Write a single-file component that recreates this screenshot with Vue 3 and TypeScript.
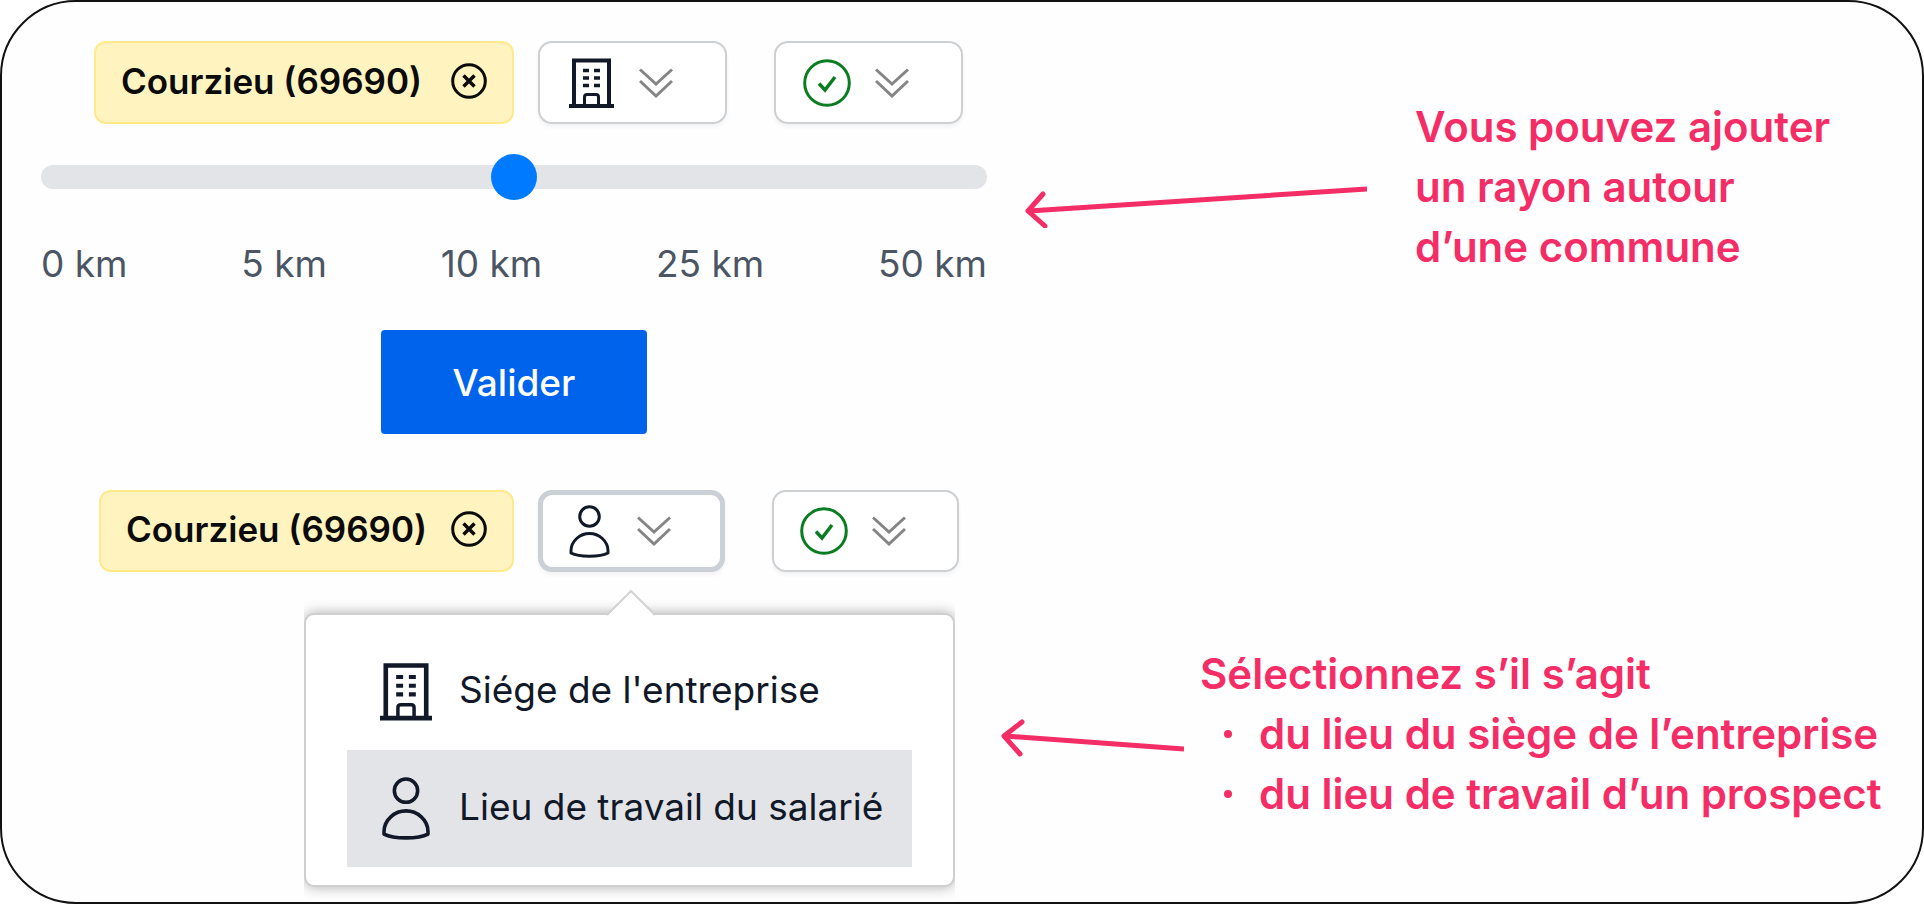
<script setup lang="ts">
import { computed, ref } from 'vue'

type PlaceKind = 'company' | 'person'

interface PlaceOption {
  kind: PlaceKind
  label: string
}

const town = 'Courzieu (69690)'
const marks: string[] = ['0 km', '5 km', '10 km', '25 km', '50 km']
const options: PlaceOption[] = [
  { kind: 'company', label: "Siége de l'entreprise" },
  { kind: 'person', label: 'Lieu de travail du salarié' },
]

const radius = ref<number>(50)
const selected = ref<PlaceKind>('person')

const rows = computed<{ id: string; kind: PlaceKind; open: boolean }[]>(() => [
  { id: 'radius', kind: 'company', open: false },
  { id: 'place', kind: selected.value, open: true },
])
</script>

<template>
  <svg class="defs" aria-hidden="true">
    <symbol id="i-company" viewBox="0 0 45 50">
      <path d="M5 48V2.500H40V48M0 48H45" fill="none" stroke="currentColor" stroke-width="4" />
      <path d="M15.500 48V39Q15.500 36.500 18 36.500H27Q29.500 36.500 29.500 39V48" fill="none" stroke="currentColor" stroke-width="3" />
      <path d="M14 12.500H20M25 12.500H31M14 20H20M25 20H31M14 27.500H20M25 27.500H31" stroke="currentColor" stroke-width="3.500" />
    </symbol>
    <symbol id="i-person" viewBox="0 0 41 53">
      <circle cx="20.500" cy="11.500" r="9.800" fill="none" stroke="currentColor" stroke-width="3" />
      <path d="M2 46C2 36 11 28.500 20.500 28.500S39 36 39 46V48C31 52.300 10 52.300 2 48Z" fill="none" stroke="currentColor" stroke-width="3" stroke-linejoin="round" />
    </symbol>
    <symbol id="i-check" viewBox="0 0 48 48">
      <circle cx="24" cy="24" r="22.300" fill="none" stroke="currentColor" stroke-width="3" />
      <path d="M16 24.500L22 31L32 18" fill="none" stroke="currentColor" stroke-width="3.500" />
    </symbol>
    <symbol id="i-chevrons" viewBox="0 0 34 30">
      <path d="M1 1.500L17 16L33 1.500M1 13L17 28L33 13" fill="none" stroke="currentColor" stroke-width="3" />
    </symbol>
    <symbol id="i-close" viewBox="0 0 36 36">
      <circle cx="18" cy="18" r="16.300" fill="none" stroke="currentColor" stroke-width="3" />
      <path d="M12.500 12.500L23.500 23.500M23.500 12.500L12.500 23.500" stroke="currentColor" stroke-width="3.500" />
    </symbol>
  </svg>

  <main class="card">
    <section v-for="row in rows" :key="row.id" class="step" :class="row.id">
      <div class="widget">
        <div class="filters">
          <span class="chip">
            {{ town }}
            <button type="button" class="close" aria-label="Retirer la commune">
              <svg class="icon-close"><use href="#i-close" /></svg>
            </button>
          </span>
          <button type="button" class="picker" :class="{ open: row.open }" :aria-expanded="row.open" aria-label="Type de lieu">
            <span class="slot">
              <svg :class="row.kind"><use :href="'#i-' + row.kind" /></svg>
            </span>
            <svg class="chevrons"><use href="#i-chevrons" /></svg>
          </button>
          <button type="button" class="picker status" aria-label="Inclure ou exclure">
            <span class="slot">
              <svg class="check"><use href="#i-check" /></svg>
            </span>
            <svg class="chevrons"><use href="#i-chevrons" /></svg>
          </button>
        </div>

        <template v-if="row.id === 'radius'">
          <input v-model.number="radius" class="slider" type="range" min="0" max="100" aria-label="Rayon" />
          <div class="marks">
            <span v-for="mark in marks" :key="mark">{{ mark }}</span>
          </div>
          <button type="button" class="submit">Valider</button>
        </template>

        <div v-else class="popup">
          <svg class="tip" viewBox="0 0 48 26" aria-hidden="true">
            <path d="M0 26L24 1L48 26Z" fill="#fff" />
            <path d="M0 25L24 1L48 25" fill="none" stroke="#d2d2d2" stroke-width="2" />
          </svg>
          <div class="panel">
            <button
              v-for="option in options"
              :key="option.kind"
              type="button"
              class="option"
              :class="{ selected: option.kind === selected }"
              :aria-pressed="option.kind === selected"
              @click="selected = option.kind"
            >
              <svg :class="option.kind"><use :href="'#i-' + option.kind" /></svg>
              <span class="label">{{ option.label }}</span>
            </button>
          </div>
        </div>
      </div>

      <template v-if="row.id === 'radius'">
        <svg class="arrow" viewBox="0 0 342 42" aria-hidden="true">
          <path d="M4 25L342 3" fill="none" stroke="#f52d66" stroke-width="5" />
          <path d="M18 8L3 25L20 40" fill="none" stroke="#f52d66" stroke-width="5" stroke-linecap="round" stroke-linejoin="round" />
        </svg>
        <p class="note">Vous pouvez ajouter<br />un rayon autour<br />d’une commune</p>
      </template>
      <template v-else>
        <svg class="arrow" viewBox="0 0 183 42" aria-hidden="true">
          <path d="M4 18L183 31" fill="none" stroke="#f52d66" stroke-width="5" />
          <path d="M21 4L3 18L19 36" fill="none" stroke="#f52d66" stroke-width="5" stroke-linecap="round" stroke-linejoin="round" />
        </svg>
        <div class="note">
          <p>Sélectionnez s’il s’agit</p>
          <ul>
            <li>du lieu du siège de l’entreprise</li>
            <li>du lieu de travail d’un prospect</li>
          </ul>
        </div>
      </template>
    </section>
  </main>
</template>

<style>
body {
  margin: 0;
  background: #fff;
}
</style>

<style scoped>
.defs {
  position: absolute;
  width: 0;
  height: 0;
}

.card {
  box-sizing: border-box;
  min-height: 100vh;
  padding: 39px 20px 15px 39px;
  border: 2px solid #111;
  border-radius: 76px;
  background: #fefefe;
  color: #111827;
  font-family: Inter, "Liberation Sans", sans-serif;
  font-size: 37px;
}

button {
  margin: 0;
  padding: 0;
  border: 0;
  background: none;
  color: inherit;
  font: inherit;
  cursor: pointer;
}

svg {
  display: block;
  flex: none;
}

.step {
  display: grid;
  align-items: start;
}

.radius {
  grid-template-columns: 946fr 342fr 497fr;
  column-gap: 38px;
}

.radius .note {
  padding-left: 10px;
}

.place {
  grid-template-columns: 944fr 183fr 702fr;
  column-gap: 16px;
  margin-top: 56px;
}

.filters {
  display: flex;
  align-items: stretch;
  height: 83px;
  margin-left: 53px;
}

.place .filters {
  height: 82px;
  margin-left: 58px;
}

.chip {
  display: flex;
  align-items: center;
  justify-content: space-between;
  box-sizing: border-box;
  width: 420px;
  padding: 0 25px 4px;
  border: 2px solid #ffe98c;
  border-radius: 12px;
  background: #fff4bf;
  color: #0b0b0b;
  font-size: 35px;
  font-weight: 600;
  white-space: nowrap;
}

.place .chip {
  width: 415px;
}

.icon-close {
  width: 36px;
  height: 36px;
}

.picker {
  display: flex;
  align-items: center;
  gap: 24px;
  box-sizing: border-box;
  width: 189px;
  margin-left: 24px;
  padding-left: 27px;
  border: 2px solid #cdd0d3;
  border-radius: 14px;
  background: #fff;
  box-shadow: 0 3px 4px rgba(0, 0, 0, 0.05);
}

.place .picker {
  width: 187px;
}

.place .picker.status {
  padding-left: 26px;
}

.place .picker.open {
  padding-left: 22px;
  border: 5px solid #cbcfd6;
}

.picker.status {
  margin-left: 47px;
}

.slot {
  display: flex;
  justify-content: center;
  width: 48px;
}

.slot .company {
  width: 45px;
  height: 50px;
}

.slot .person {
  width: 41px;
  height: 53px;
}

.check {
  width: 48px;
  height: 48px;
  color: #0a7d22;
}

.chevrons {
  width: 34px;
  height: 30px;
  color: #858585;
}

.slider {
  display: block;
  width: 100%;
  height: 24px;
  margin: 41px 0 0;
  border-radius: 12px;
  background: #e2e4e7;
  appearance: none;
}

.slider::-webkit-slider-thumb {
  width: 46px;
  height: 46px;
  border-radius: 50%;
  background: #007bff;
  appearance: none;
}

.marks {
  display: flex;
  justify-content: space-between;
  margin-top: 52px;
  color: #4b5563;
  line-height: 46px;
}

.submit {
  display: block;
  width: 266px;
  height: 104px;
  margin: 43px auto 0;
  border-radius: 4px;
  background: #0063eb;
  color: #fff;
  font-weight: 500;
}

.popup {
  width: 651px;
  margin: 18px 0 0 263px;
}

.tip {
  position: relative;
  z-index: 1;
  width: 48px;
  height: 26px;
  margin: 0 0 -3px 303px;
}

.panel {
  box-sizing: border-box;
  padding: 18px 41px;
  border: 2px solid #cfcfcf;
  border-radius: 10px;
  background: #fff;
  box-shadow: 0 0 14px rgba(0, 0, 0, 0.32);
  clip-path: inset(-24px 0 -14px 0);
}

.option {
  display: flex;
  align-items: center;
  gap: 27px;
  width: 100%;
  height: 117px;
  padding-left: 33px;
  white-space: nowrap;
}

.label {
  padding-bottom: 4px;
}

.option.selected {
  background: #e2e4e8;
}

.option .company {
  width: 52px;
  height: 59px;
}

.option .person {
  width: 52px;
  height: 63px;
}

.arrow {
  width: 100%;
  height: auto;
}

.radius .arrow {
  margin-top: 145px;
}

.place .arrow {
  margin-top: 228px;
}

.note {
  margin: 56px 0 0;
  color: #f52d66;
  font-family: Inter, "Liberation Sans", sans-serif;
  font-size: 42px;
  font-weight: 600;
  line-height: 60px;
  white-space: nowrap;
}

.place .note {
  margin-top: 154px;
}

.note p {
  margin: 0;
}

.note ul {
  margin: 0;
  padding: 0;
  list-style: none;
}

.note li {
  display: flex;
  align-items: center;
  gap: 27px;
  padding-left: 24px;
}

.note li::before {
  width: 8px;
  height: 8px;
  border-radius: 50%;
  background: currentColor;
  content: "";
}
</style>
